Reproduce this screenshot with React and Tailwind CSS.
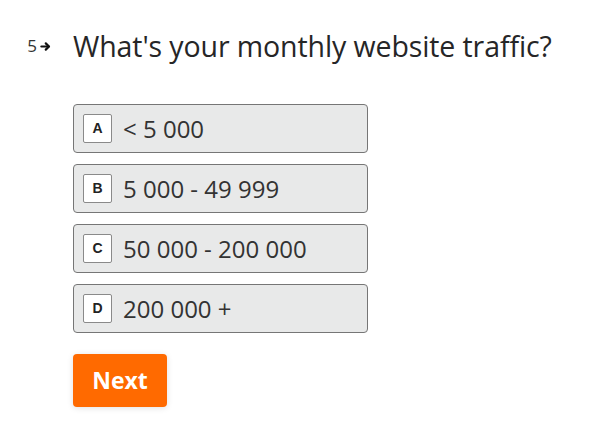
import React, { useState } from 'react';

const options = [
    { key: 'A', label: '< 5 000' },
    { key: 'B', label: '5 000 - 49 999' },
    { key: 'C', label: '50 000 - 200 000' },
    { key: 'D', label: '200 000 +' },
];

const ArrowIcon = () => (
    <svg className="w-[11px] h-[11px]" viewBox="0 0 12 12" fill="none" stroke="currentColor" strokeWidth="2.4" strokeLinecap="round" strokeLinejoin="round">
        <path d="M1.5 6h8" />
        <path d="M6.3 2.6L9.8 6l-3.5 3.4" />
    </svg>
);

const App = () => {
    const [selected, setSelected] = useState(null);

    return (
        <div className="min-h-screen bg-white font-['Open_Sans',sans-serif] text-[#262627] pt-[26px]">
            {/* Question */}
            <div className="flex items-start">
                <div className="w-[73px] flex items-center justify-end pr-[22px] pt-[10px] text-[17px] leading-5 text-[#333]">
                    <span>5</span>
                    <span className="ml-[3px] text-[#111]"><ArrowIcon /></span>
                </div>
                <h1 className="text-[28.5px] leading-10 tracking-[-0.1px]">What's your monthly website traffic?</h1>
            </div>

            {/* Options */}
            <div className="ml-[73px] mt-[38px] w-[295px] flex flex-col gap-[11px]">
                {options.map((opt) => (
                    <button
                        key={opt.key}
                        type="button"
                        onClick={() => setSelected(opt.key)}
                        className="h-[49px] flex items-center px-[9px] border border-[#767676] rounded-[4px] bg-[#e8e9e9] text-left"
                    >
                        <span className="w-[29px] h-[29px] flex items-center justify-center bg-white border border-[#8a8a8a] rounded-[2px] text-[14px] font-['Liberation_Sans',sans-serif] font-bold text-[#222]">
                            {opt.key}
                        </span>
                        <span className="ml-[11px] text-[24px] text-[#333]">{opt.label}</span>
                    </button>
                ))}
            </div>

            {/* Next */}
            <button
                type="button"
                className="ml-[73px] mt-[21px] w-[94px] h-[53px] rounded-[4px] bg-[#ff6a00] text-white text-[23px] font-bold shadow-[0_1px_6px_rgba(0,0,0,0.12)]"
            >
                Next
            </button>
        </div>
    );
};

export default App;
